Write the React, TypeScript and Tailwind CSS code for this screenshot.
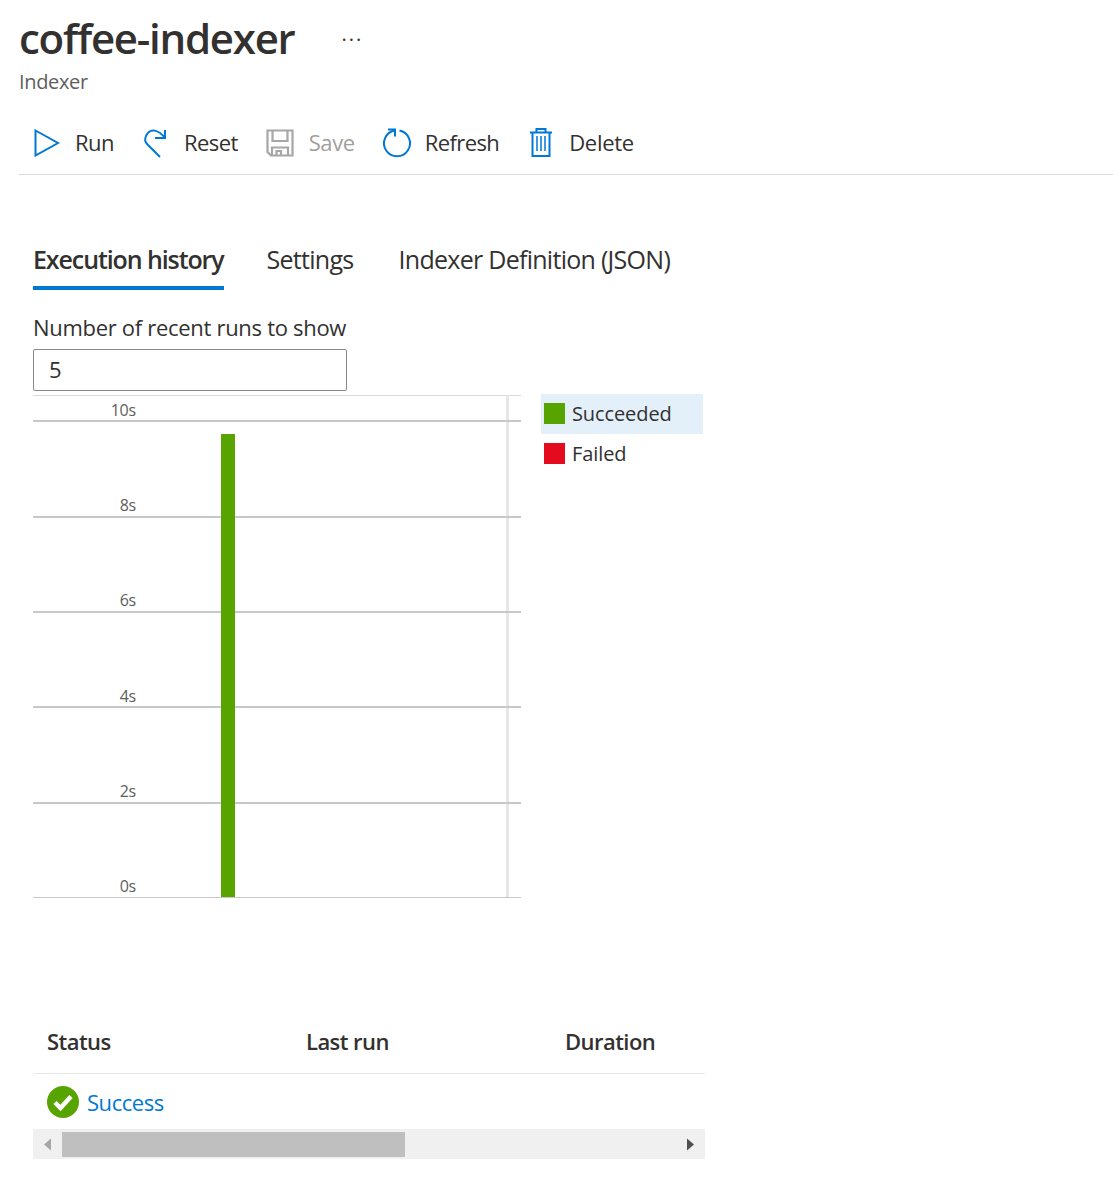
import React from 'react';

const font = { fontFamily: '"Open Sans", sans-serif' };

function Toolbar() {
  return (
    <div className="flex items-center h-[61px] pb-[3px] border-b border-[#d9d9d9] text-[#323130] text-[22px] tracking-[-0.5px]">
      <button className="flex items-center ml-[15px]">
        <svg width="26" height="28" viewBox="0 0 26 28" fill="none" stroke="#0078d4" strokeWidth="2"><path d="M1.5 1.5 L24 14 L1.5 26.5 Z" /></svg>
        <span className="ml-[15px]">Run</span>
      </button>
      <button className="flex items-center ml-[30px]">
        <svg width="24" height="30" viewBox="0 0 24 30" fill="none" stroke="#0078d4" strokeWidth="2"><path d="M21 10 C15 2 6 -1 2 8 C0 13 2 15 4 17 L16 29" /><path d="M21 2 V10 H11" /></svg>
        <span className="ml-[16px] tracking-[-0.6px]">Reset</span>
      </button>
      <button className="flex items-center ml-[28px] text-[#a19f9d]">
        <svg width="28" height="28" viewBox="0 0 28 28" fill="none" stroke="#a6a6a6" strokeWidth="2.2"><path d="M1.5 1.5 H26.5 V26.5 H5 L1.5 23 Z" /><path d="M6.5 1.5 V12 H21.5 V1.5" /><path d="M6 27 V18.5 H22 V27" /><path d="M10.5 27 V22 H15 V27" /></svg>
        <span className="ml-[15px] tracking-[-0.4px]">Save</span>
      </button>
      <button className="flex items-center ml-[28px]">
        <svg width="30" height="30" viewBox="0 0 30 30" fill="none" stroke="#0078d4" strokeWidth="2"><path d="M16.5 2.5 A13 13 0 1 1 11.5 2.5" /><path d="M5 1.5 H12 V8.5" /></svg>
        <span className="ml-[12px] tracking-[-0.6px]">Refresh</span>
      </button>
      <button className="flex items-center ml-[30px]">
        <svg width="24" height="30" viewBox="0 0 24 30" fill="none" stroke="#0078d4" strokeWidth="2"><path d="M1 4.5 H23" /><path d="M7.5 4.5 V1 H16.5 V4.5" /><path d="M3.5 4.5 V28 H20.5 V4.5" /><path d="M8 8 V23 M12 8 V23 M16 8 V23" strokeWidth="1.5" /></svg>
        <span className="ml-[16px] tracking-[-0.3px]">Delete</span>
      </button>
    </div>
  );
}

function Chart() {
  const grid = [26, 122, 217, 312, 408];
  const labels = [
    { y: 21, text: '10s' },
    { y: 116, text: '8s' },
    { y: 211, text: '6s' },
    { y: 307, text: '4s' },
    { y: 402, text: '2s' },
    { y: 497, text: '0s' },
  ];
  return (
    <svg width="488" height="504" viewBox="0 0 488 504" className="block">
      <line x1="0" x2="488" y1="0.5" y2="0.5" stroke="#d9d9d9" />
      <rect x="473" y="0" width="3" height="503" fill="#e6e6e6" />
      {grid.map((y) => (
        <line key={y} x1="0" x2="488" y1={y} y2={y} stroke="#c8c8c8" strokeWidth="2" />
      ))}
      <line x1="0" x2="488" y1="502.5" y2="502.5" stroke="#c8c8c8" />
      <rect x="188" y="39" width="14" height="463" fill="#57a300" />
      {labels.map((l) => (
        <text key={l.text} x="103" y={l.y} textAnchor="end" fontSize="16" fill="#605e5c" letterSpacing="-0.2" style={font}>{l.text}</text>
      ))}
    </svg>
  );
}

function Legend() {
  return (
    <div className="ml-[20px] -mt-[1px] w-[162px] text-[20px] tracking-[-0.1px] text-[#323130]">
      <div className="flex items-center h-[40px] bg-[#e3f0fa] pl-[3px]">
        <span className="w-[21px] h-[21px] bg-[#57a300] -mt-[2px]" />
        <span className="ml-[7px]">Succeeded</span>
      </div>
      <div className="flex items-center h-[40px] pl-[3px]">
        <span className="w-[21px] h-[21px] bg-[#e50b1f] -mt-[2px]" />
        <span className="ml-[7px]">Failed</span>
      </div>
    </div>
  );
}

function RunsTable() {
  return (
    <div className="w-[672px] mt-[117px]">
      <div className="grid grid-cols-[259px_259px_1fr] h-[58px] pb-[6px] items-center border-b border-[#e8e8e8] pl-[14px] text-[22px] font-semibold tracking-[-0.55px] text-[#323130]">
        <span>Status</span>
        <span>Last run</span>
        <span>Duration</span>
      </div>
      <div className="flex items-center h-[55px] pl-[14px]">
        <svg width="32" height="32" viewBox="0 0 32 32">
          <circle cx="16" cy="16" r="16" fill="#57a300" />
          <path d="M8 16.5 L13.5 22 L24 10.5" fill="none" stroke="#fff" strokeWidth="4.5" />
        </svg>
        <a className="ml-[8px] mt-[2px] text-[22px] tracking-[-0.45px] text-[#0078d4]">Success</a>
      </div>
      <div className="flex items-center justify-between h-[30px] bg-[#f0f0f0]">
        <div className="flex items-center h-full">
          <svg width="29" height="29" viewBox="0 0 29 29"><path d="M11 14.5 L18 8.5 V20.5 Z" fill="#a6a6a6" /></svg>
          <div className="w-[343px] h-[25px] self-start mt-[3px] bg-[#bfbfbf]" />
        </div>
        <svg width="29" height="29" viewBox="0 0 29 29"><path d="M11 8.5 L18 14.5 L11 20.5 Z" fill="#505050" /></svg>
      </div>
    </div>
  );
}

export default function App() {
  return (
    <div className="bg-white min-h-[1194px] w-[1113px] pl-[19px]" style={font}>
      <div className="flex items-center h-[64px] pt-[12px]">
        <h1 className="text-[42px] leading-none font-semibold tracking-[-1.25px] text-[#323130]">coffee-indexer</h1>
        <span className="ml-[47px] text-[20px] leading-none tracking-[2px] text-[#323130] mt-[4px]">···</span>
      </div>
      <div className="text-[20px] leading-[28px] tracking-[-0.35px] text-[#605e5c] mt-[4px]">Indexer</div>
      <div className="mt-[18px]"><Toolbar /></div>
      <div className="pl-[14px]">
        <div className="flex mt-[56px] text-[25px] tracking-[-0.72px] text-[#323130] h-[59px]">
          <div className="border-b-[4px] border-[#0078d4] font-semibold tracking-[-1.1px] h-full pt-[10px]">Execution history</div>
          <div className="ml-[43px] pt-[10px]">Settings</div>
          <div className="ml-[45px] pt-[10px]">Indexer Definition (JSON)</div>
        </div>
        <div className="mt-[21px] text-[22px] leading-[32px] tracking-[-0.3px] text-[#323130]">Number of recent runs to show</div>
        <div className="mt-[6px] w-[314px] h-[42px] border border-[#8a8886] rounded-[2px] flex items-center pl-[15px] pb-[2px] text-[22px] text-[#323130]">5</div>
        <div className="flex items-start mt-[4px]">
          <Chart />
          <Legend />
        </div>
        <RunsTable />
      </div>
    </div>
  );
}
